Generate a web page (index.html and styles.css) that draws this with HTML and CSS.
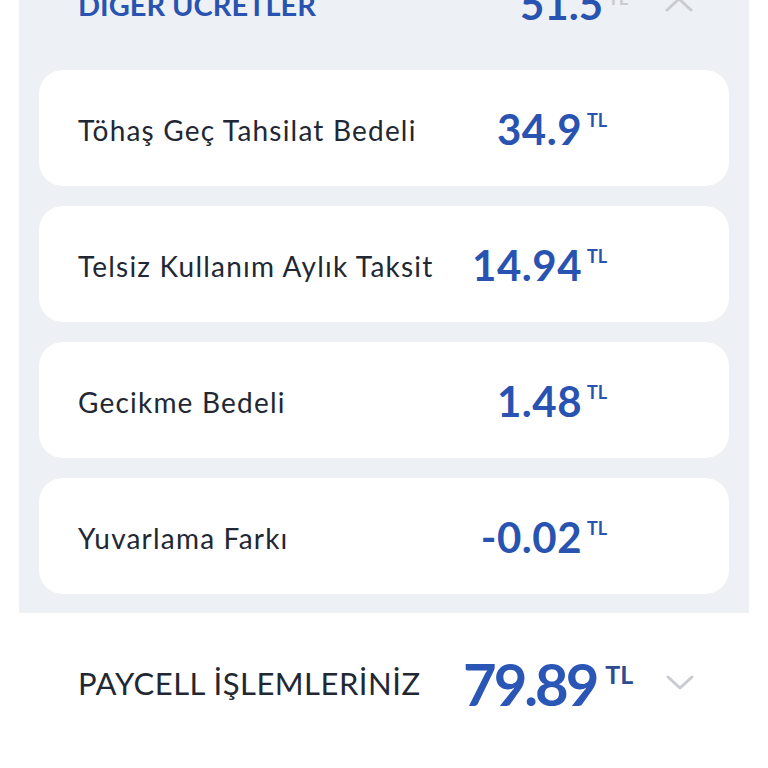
FILE: index.html
```html
<!DOCTYPE html>
<html lang="tr">
<head>
    <meta charset="UTF-8">
    <meta name="viewport" content="width=device-width, initial-scale=1.0">
    <title>Fatura Detayı</title>
    <link rel="stylesheet" href="styles.css">
</head>
<body>
    <div class="fees-panel">
        <div class="fees-header">
            <span class="fees-title">DİĞER ÜCRETLER</span>
            <span class="fees-total">51.5<sup>TL</sup></span>
            <svg class="chevron" width="30" height="18" viewBox="0 0 30 18">
                <path d="M3 15 L15 4 L27 15" fill="none" stroke="#c9cbd0" stroke-width="3" stroke-linecap="round" stroke-linejoin="round"/>
            </svg>
        </div>

        <div class="fee-card">
            <span class="fee-name">Töhaş Geç Tahsilat Bedeli</span>
            <span class="fee-amount">34.9</span>
            <span class="fee-unit">TL</span>
        </div>
        <div class="fee-card">
            <span class="fee-name">Telsiz Kullanım Aylık Taksit</span>
            <span class="fee-amount">14.94</span>
            <span class="fee-unit">TL</span>
        </div>
        <div class="fee-card">
            <span class="fee-name">Gecikme Bedeli</span>
            <span class="fee-amount">1.48</span>
            <span class="fee-unit">TL</span>
        </div>
        <div class="fee-card">
            <span class="fee-name">Yuvarlama Farkı</span>
            <span class="fee-amount">-0.02</span>
            <span class="fee-unit">TL</span>
        </div>
    </div>

    <div class="summary-row">
        <span class="summary-title">PAYCELL İŞLEMLERİNİZ</span>
        <span class="summary-total">79.89<sup>TL</sup></span>
        <svg class="chevron" width="30" height="18" viewBox="0 0 30 18">
            <path d="M3 3 L15 14 L27 3" fill="none" stroke="#c9cbd0" stroke-width="3" stroke-linecap="round" stroke-linejoin="round"/>
        </svg>
    </div>
</body>
</html>
```

FILE: styles.css
```css
body {
    margin: 0;
    font-family: Lato, "Liberation Sans", sans-serif;
    background: #fff;
    color: #222833;
    overflow: hidden;
}
.fees-panel {
    margin: -60px 19px 0;
    padding: 0 20px 19px;
    background-color: #edf0f4;
    display: flex;
    flex-direction: column;
    gap: 20px;
}
.fees-header {
    box-sizing: border-box;
    height: 110px;
    padding: 18px 0 0 39px;
    display: flex;
    align-items: center;
}
.fees-title {
    font-size: 29px;
    font-weight: 700;
    color: #2953b0;
    width: 442px;
}
.fees-total {
    font-size: 42px;
    font-weight: 700;
    color: #2953b0;
}
.fees-total sup {
    font-size: 18px;
    color: #c9cbd0;
    margin-left: 5px;
}
.fees-header .chevron {
    margin-left: 36px;
}
.fee-card {
    height: 116px;
    background-color: #fff;
    border-radius: 24px;
    display: grid;
    grid-template-columns: 1fr auto 147px;
    align-items: center;
    padding-left: 39px;
}
.fee-name {
    font-size: 28px;
    letter-spacing: 1.2px;
    padding-top: 3px;
}
.fee-amount {
    font-size: 42px;
    font-weight: 700;
    color: #2953b0;
    letter-spacing: 0.5px;
    text-align: right;
    padding-top: 2px;
}
.fee-unit {
    font-size: 18px;
    font-weight: 700;
    color: #2953b0;
    align-self: start;
    margin-top: 39px;
    padding-left: 5px;
}
.summary-row {
    height: 140px;
    display: flex;
    align-items: center;
    padding-left: 78px;
}
.summary-title {
    font-size: 31px;
    letter-spacing: 0.5px;
    width: 385px;
}
.summary-total {
    font-size: 58px;
    font-weight: 700;
    color: #2a56b5;
    letter-spacing: -3px;
}
.summary-total sup {
    font-size: 25px;
    color: #2e4b8f;
    margin-left: 9px;
    letter-spacing: 0;
    vertical-align: 22px;
}
.summary-row .chevron {
    margin-left: 32px;
}
```
